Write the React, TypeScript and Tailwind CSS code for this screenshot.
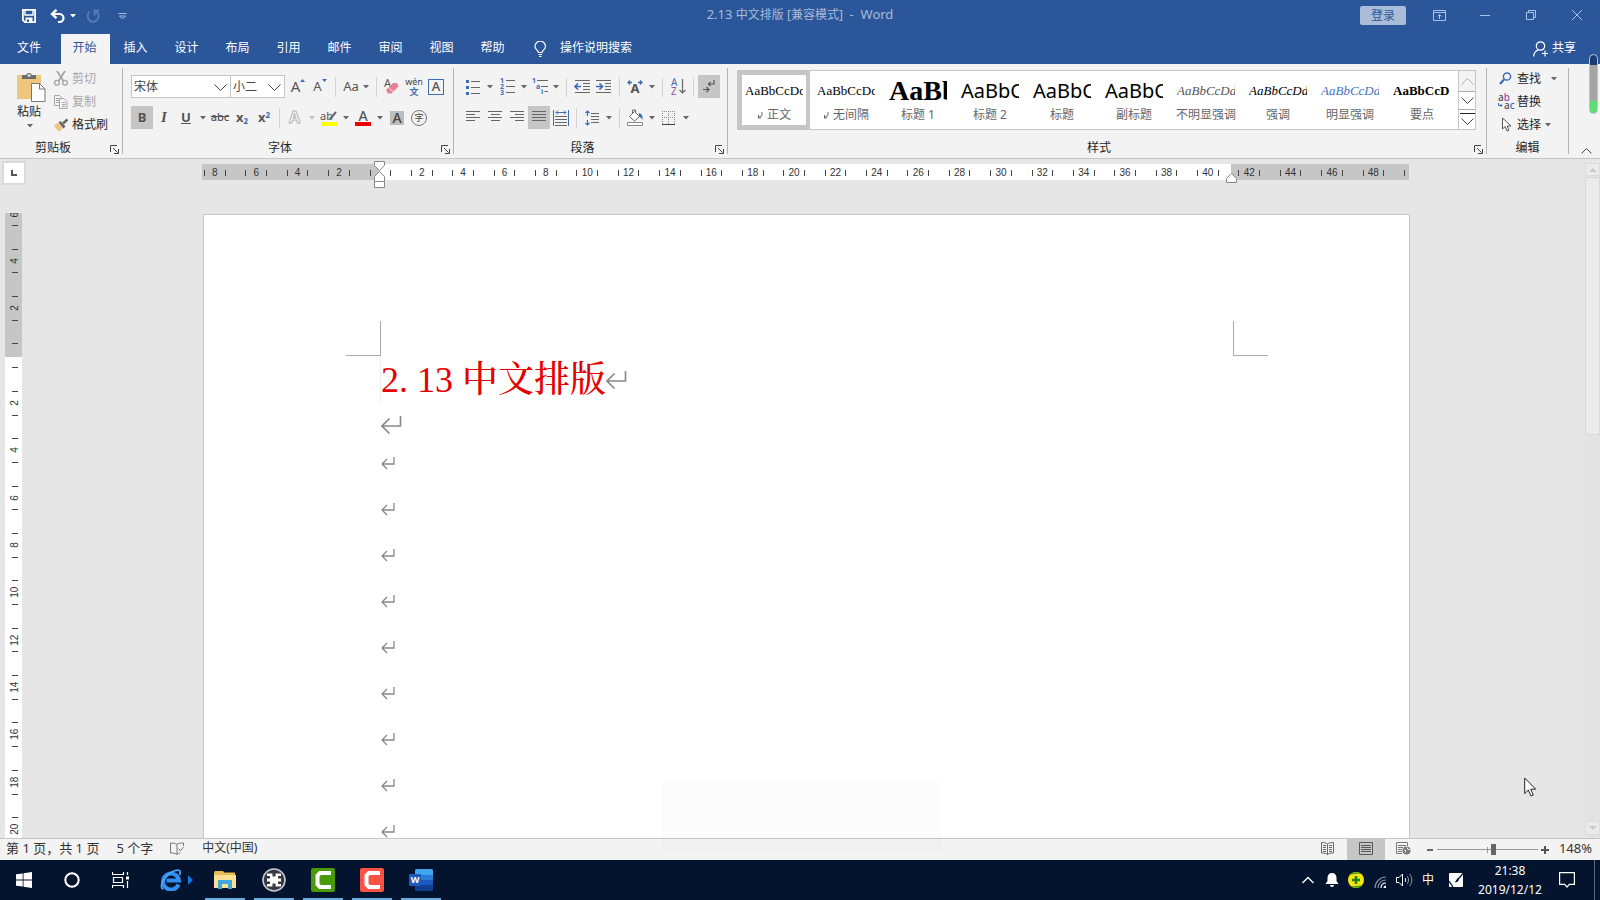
import { useState } from 'react'
import type { ReactNode } from 'react'

const tabs = ['开始', '插入', '设计', '布局', '引用', '邮件', '审阅', '视图', '帮助']

const styleItems = [
  { name: '正文', sample: 'AaBbCcDd', mark: true, font: 'font-["Liberation_Serif",serif] text-[13px] text-black' },
  { name: '无间隔', sample: 'AaBbCcDd', mark: true, font: 'font-["Liberation_Serif",serif] text-[13px] text-black' },
  { name: '标题 1', sample: 'AaBb', font: 'font-["Liberation_Serif",serif] text-[28px] font-bold text-black' },
  { name: '标题 2', sample: 'AaBbC', font: 'text-xl text-black' },
  { name: '标题', sample: 'AaBbC', font: 'text-xl text-black' },
  { name: '副标题', sample: 'AaBbC', font: 'text-xl text-black' },
  { name: '不明显强调', sample: 'AaBbCcDd', font: 'font-["Liberation_Serif",serif] text-[13px] italic text-[#555]' },
  { name: '强调', sample: 'AaBbCcDd', font: 'font-["Liberation_Serif",serif] text-[13px] italic text-black' },
  { name: '明显强调', sample: 'AaBbCcDd', font: 'font-["Liberation_Serif",serif] text-[13px] italic text-[#4472c4]' },
  { name: '要点', sample: 'AaBbCcD', font: 'font-["Liberation_Serif",serif] text-[13px] font-bold text-black' },
]

// One entry per gap between ticks, blank gaps included
const rulerCells = Array.from({ length: 58 }, (_, i) => {
  if (i % 2 === 1) return ''
  const value = Math.abs(8 - i)
  return value === 0 ? '' : String(value)
})

const verticalCells = Array.from({ length: 26 }, (_, i) => {
  if (i % 2 === 0) return ''
  const value = Math.abs(5 - i)
  return value === 0 ? '' : String(value)
})

type IconProps = {
  w: number
  h: number
  className?: string
  children: ReactNode
}

function Icon({ w, h, className = '', children }: IconProps) {
  return (
    <svg aria-hidden="true" className={`shrink-0 ${className}`} fill="none" height={h} viewBox={`0 0 ${w} ${h}`} width={w}>
      {children}
    </svg>
  )
}

function Caret({ light = false }: { light?: boolean }) {
  return (
    <Icon h={4} w={6}>
      <path d="M0 0h6L3 3.6z" fill={light ? '#bdbdbd' : '#666'} />
    </Icon>
  )
}

type ToolProps = {
  label: string
  active?: boolean
  className?: string
  children: ReactNode
}

function Tool({ label, active = false, className = 'w-[22px]', children }: ToolProps) {
  return (
    <button
      aria-label={label}
      className={`flex h-[23px] shrink-0 items-center justify-center text-[#555] ${className} ${active ? 'bg-[#c6c6c6]' : 'hover:bg-[#d5d5d5]'}`}
      type="button"
    >
      {children}
    </button>
  )
}

function CaretTool({ label, light }: { label: string; light?: boolean }) {
  return (
    <Tool className="w-3" label={label}>
      <Caret light={light} />
    </Tool>
  )
}

function Divider() {
  return <span className="mx-1 h-5 w-px shrink-0 bg-[#d4d4d4]" />
}

type GroupProps = {
  title: string
  launcher?: boolean
  className?: string
  children: ReactNode
}

function Group({ title, launcher = true, className = '', children }: GroupProps) {
  return (
    <section className={`flex h-[86px] flex-col border-r border-[#b5b5b5] ${className}`}>
      <div className="flex-1">{children}</div>
      <div className="flex h-[14px] items-center">
        <h2 className="flex-1 pt-[2px] text-center leading-[14px] text-[#262626]">{title}</h2>
        {launcher && (
          <button aria-label={`${title}设置`} className="flex w-4 justify-center pt-1" type="button">
            <Icon h={9} w={9}>
              <path d="M.5 7V.5H7M3 3l4.5 4.5M8.5 4v4.5H4" stroke="#444" />
            </Icon>
          </button>
        )}
      </div>
    </section>
  )
}

function Lines({ rows }: { rows: [number, number][] }) {
  return (
    <Icon h={13} w={15}>
      {rows.map(([x1, x2], i) => (
        <path d={`M${x1} ${i * 3 + 0.5}H${x2}`} key={i} stroke="#666" />
      ))}
    </Icon>
  )
}

function TitleBar() {
  return (
    <div className="grid h-[34px] grid-cols-[1fr_auto_1fr] text-white">
      <div className="flex items-center pb-[2px] pl-[22px]">
        <button aria-label="保存" type="button">
          <Icon h={14} w={14}>
            <path d="M.9.9h12.2v12.2H2.9L.9 11.2z" stroke="#fff" strokeWidth="1.8" />
            <path d="M3 1v5h8V1" stroke="#fff" strokeWidth="1.4" />
            <path d="M3.5 8.5h7V14h-7z" fill="#fff" />
            <path d="M5 10.5h2V13H5z" fill="#2b579a" />
          </Icon>
        </button>
        <button aria-label="撤消" className="ml-[14px]" type="button">
          <Icon h={14} w={16}>
            <path d="M3 5h6.5a4 4 0 0 1 0 8H8" stroke="#fff" strokeWidth="2.2" />
            <path d="M6.5.8 2 5l4.500 4.200" stroke="#fff" strokeWidth="2.4" />
          </Icon>
        </button>
        <button aria-label="撤消列表" className="ml-1" type="button">
          <Icon h={4} w={6}>
            <path d="M0 0h6L3 3.500z" fill="#fff" />
          </Icon>
        </button>
        <button aria-label="重复" className="ml-[10px]" type="button">
          <Icon h={14} w={14}>
            <path d="M8 1.700A5.500 5.500 0 1 1 3.500 3M8.500 6.500V1.500H13" stroke="#5479b4" strokeWidth="2" />
          </Icon>
        </button>
        <button aria-label="自定义快速访问工具栏" className="ml-[18px]" type="button">
          <Icon h={7} w={9}>
            <path d="M.5.5h8M1.500 3l3 3 3-3z" stroke="#a8bddd" />
          </Icon>
        </button>
      </div>
      <h1 className="flex items-center pb-1 text-[#a6bad9]">
        <span className="whitespace-pre">
          <span className="text-[13px]">2.13 </span>中文排版 [兼容模式]<span className="text-[13px]">  -  Word</span>
        </span>
      </h1>
      <div className="flex items-start justify-end">
        <button className="mt-[6px] mr-[10px] h-[19px] w-[46px] rounded-[2px] bg-[#aabcd7] leading-[18px] text-[#2b579a]" type="button">
          登录
        </button>
        <button aria-label="功能区显示选项" className="flex h-[30px] w-[46px] items-center justify-center" type="button">
          <Icon h={11} w={13}>
            <path d="M.5.500h12v10H.5zM.500 2.500h12M6.500 9V4.500M4.500 6.500l2-2 2 2" stroke="#a9c3e8" />
          </Icon>
        </button>
        <button aria-label="最小化" className="flex h-[30px] w-[46px] items-center justify-center" type="button">
          <Icon h={1} w={10}>
            <path d="M0 .5h10" stroke="#a9c3e8" />
          </Icon>
        </button>
        <button aria-label="向下还原" className="flex h-[30px] w-[46px] items-center justify-center" type="button">
          <Icon h={10} w={10}>
            <path d="M.5 2.500h7v7h-7zM2.500 2.500v-2h7v7h-2" stroke="#a9c3e8" />
          </Icon>
        </button>
        <button aria-label="关闭" className="flex h-[30px] w-[46px] items-center justify-center" type="button">
          <Icon h={10} w={10}>
            <path d="m0 0 10 10M10 0 0 10" stroke="#a9c3e8" />
          </Icon>
        </button>
      </div>
    </div>
  )
}

function TabBar({ active, onSelect }: { active: string; onSelect: (tab: string) => void }) {
  return (
    <nav className="flex h-[30px] items-stretch text-white">
      <button className="w-[60px] pr-[2px] pb-[2px]" type="button">
        文件
      </button>
      <div className="flex" role="tablist">
        {tabs.map((tab) => (
          <button
            aria-selected={tab === active}
            className={`mx-px w-[49px] pr-[2px] pb-[2px] ${tab === active ? 'bg-[#f3f3f3] text-[#2b579a]' : ''}`}
            key={tab}
            onClick={() => onSelect(tab)}
            role="tab"
            type="button"
          >
            {tab}
          </button>
        ))}
      </div>
      <button className="ml-[15px] flex items-center gap-[13px] pb-[2px]" type="button">
        <Icon className="mt-[2px]" h={17} w={13}>
          <path d="M4.500 11.500C4.500 9.500 1 8.500 1 5.500a5.200 5.200 0 0 1 10.500 0c0 3-3.500 4-3.500 6zM4.500 13.500H8M5 15.500h2.500" stroke="#fff" strokeWidth="1.200" />
        </Icon>
        操作说明搜索
      </button>
      <button className="mr-6 ml-auto flex items-center gap-1 pb-[2px]" type="button">
        <Icon className="mt-[2px]" h={16} w={15}>
          <circle cx="7.500" cy="5" r="4.200" stroke="#fff" strokeWidth="1.200" />
          <path d="M.7 15.500c0-3.500 1.800-5.500 4.500-6.500M12 9.500v6M9 12.500h6" stroke="#fff" strokeWidth="1.200" />
        </Icon>
        共享
      </button>
    </nav>
  )
}

function ClipboardGroup() {
  return (
    <Group className="w-[123px]" title="剪贴板">
      <div className="flex">
        <button className="ml-[17px] flex w-[29px] flex-col pt-[3px] text-left text-[#262626]" type="button">
          <Icon h={31} w={29}>
            <path d="M0 4h24v24H0z" fill="#eec67c" />
            <path d="M5 8V4h4a3.200 3.200 0 0 1 6 0h4v4z" fill="#6d6d6d" />
            <path d="M10.500 3.500h3v2h-3z" fill="#f3f3f3" />
            <path d="M14.500 12.500h8l5.500 5.500v12.500H14.500z" fill="#fff" stroke="#777" />
            <path d="M22.500 12.500V18H28" stroke="#777" />
          </Icon>
          <span className="leading-5">粘贴</span>
          <span className="mt-[2px] ml-[10px]">
            <Caret />
          </span>
        </button>
        <div className="ml-2 flex flex-col">
          <button className="flex h-[23px] items-center gap-1 pb-[2px] text-[#a6a6a6]" type="button">
            <Icon h={15} w={14}>
              <path d="M3 0l6.500 10M11 0 4.500 10" stroke="#a3a3a3" strokeWidth="1.700" />
              <circle cx="3" cy="11.800" r="2.400" stroke="#a3a3a3" strokeWidth="1.300" />
              <circle cx="11" cy="11.800" r="2.400" stroke="#a3a3a3" strokeWidth="1.300" />
            </Icon>
            剪切
          </button>
          <button className="flex h-[23px] items-center gap-1 pb-[2px] text-[#a6a6a6]" type="button">
            <Icon h={14} w={14}>
              <path d="M5.500 10.500h-5V.5h5l2 2V4M2 3.500h3M2 5.500h3M2 7.500h3M5.500 3.500H10l3 3v7H5.500zM8 7.500h3.500M8 9.500h3.500M8 11.500h3.500" stroke="#a6a6a6" />
            </Icon>
            复制
          </button>
          <button className="flex h-[23px] items-center gap-1 pb-[2px] text-[#262626]" type="button">
            <Icon h={14} w={14}>
              <path d="m0 7 4-2 5 5-3.500 3.500C4 13 1 9.500 0 7z" fill="#eec67c" />
              <path d="m4.500 4.500 2-1.500 5 5.500-2 2z" fill="#666" />
              <path d="m9 5.500 4.500-4" stroke="#666" strokeWidth="2.500" />
            </Icon>
            格式刷
          </button>
        </div>
      </div>
    </Group>
  )
}

function FontGroup() {
  return (
    <Group className="w-[331px] pl-2 [&>div:last-child]:-ml-2" title="字体">
      <div className="flex items-center pt-[7px]">
        <div className="relative h-[23px] w-[100px]">
          <select aria-label="字体" className="h-full w-full appearance-none border border-[#c6c6c6] bg-white pl-[2px] text-[#444]" defaultValue="宋体">
            <option>宋体</option>
            <option>黑体</option>
          </select>
          <Icon className="pointer-events-none absolute top-[9px] right-1" h={7} w={13}>
            <path d="m.5.500 6 6 6-6" stroke="#444" />
          </Icon>
        </div>
        <div className="relative mr-[2px] -ml-px h-[23px] w-[55px]">
          <select aria-label="字号" className="h-full w-full appearance-none border border-[#c6c6c6] bg-white pl-[2px] text-[#444]" defaultValue="小二">
            <option>小二</option>
            <option>三号</option>
          </select>
          <Icon className="pointer-events-none absolute top-[9px] right-1" h={7} w={13}>
            <path d="m.5.500 6 6 6-6" stroke="#444" />
          </Icon>
        </div>
        <Tool label="增大字号">
          <span className="text-[15px] leading-none">A</span>
          <Icon className="mb-3" h={3} w={5}>
            <path d="M0 3h5L2.500 0z" fill="#3e6db5" />
          </Icon>
        </Tool>
        <Tool label="减小字号">
          <span className="text-[13px] leading-none">A</span>
          <Icon className="mb-3" h={3} w={5}>
            <path d="M0 0h5L2.500 3z" fill="#3e6db5" />
          </Icon>
        </Tool>
        <Divider />
        <Tool className="w-8 gap-1" label="更改大小写">
          <span className="text-[13px] leading-none">Aa</span>
          <Caret />
        </Tool>
        <Divider />
        <Tool label="清除所有格式">
          <Icon h={17} w={16}>
            <text fill="#555" fontSize="11" x="0" y="9">A</text>
            <path d="m2 12 7-7h4l1.500 3.500-7 7H4z" fill="#e58096" />
            <path d="m4.500 9.500 5 4.500" stroke="#f3f3f3" />
          </Icon>
        </Tool>
        <Tool className="w-[22px] flex-col" label="拼音指南">
          <span className="text-[9px] leading-[10px] text-[#444]">wén</span>
          <span className="text-[9px] leading-[10px] font-bold text-[#3e6db5]">文</span>
        </Tool>
        <Tool label="字符边框">
          <span className="flex h-4 w-4 items-center justify-center border border-[#3e6db5] text-[13px] leading-none font-medium">A</span>
        </Tool>
      </div>
      <div className="flex items-center pt-2">
        <Tool active label="加粗">
          <span className="text-[13px] font-bold">B</span>
        </Tool>
        <Tool label="倾斜">
          <span className="font-['Liberation_Serif',serif] text-[15px] font-bold italic">I</span>
        </Tool>
        <Tool label="下划线">
          <span className="text-[13px] font-bold underline">U</span>
        </Tool>
        <CaretTool label="下划线样式" />
        <Tool label="删除线">
          <span className="text-[11px] font-medium line-through">abc</span>
        </Tool>
        <Tool label="下标">
          <span className="text-[13px] font-bold">
            x<sub className="text-[8px] text-[#3e6db5]">2</sub>
          </span>
        </Tool>
        <Tool label="上标">
          <span className="text-[13px] font-bold">
            x<sup className="text-[8px] text-[#3e6db5]">2</sup>
          </span>
        </Tool>
        <Divider />
        <Tool label="文本效果">
          <Icon h={15} w={14}>
            <text fill="#fff" fontSize="16" fontWeight="bold" stroke="#b5b5b5" x="1" y="13">A</text>
          </Icon>
        </Tool>
        <CaretTool label="文本效果列表" light />
        <Tool className="w-[22px] flex-col" label="突出显示">
          <span className="flex h-3 items-center text-[11px] leading-none">
            ab
            <Icon className="-ml-1" h={11} w={9}>
              <path d="m1 9 6-7" stroke="#666" strokeWidth="2" />
            </Icon>
          </span>
          <span className="h-1 w-4 bg-[#ffff00]" />
        </Tool>
        <CaretTool label="突出显示颜色" />
        <Tool className="w-[22px] flex-col" label="字体颜色">
          <span className="h-3 text-[14px] leading-[12px] font-medium">A</span>
          <span className="h-1 w-4 bg-[#e60000]" />
        </Tool>
        <CaretTool label="字体颜色列表" />
        <Tool label="字符底纹">
          <span className="h-[14px] w-[14px] bg-[#bdbdbd] text-[14px] leading-[13px] font-medium text-[#444]">A</span>
        </Tool>
        <Tool label="带圈字符">
          <span className="flex h-4 w-4 shrink-0 items-center justify-center rounded-full border border-[#777] text-[9px] leading-none text-[#444]">字</span>
        </Tool>
      </div>
    </Group>
  )
}

function ParagraphGroup() {
  return (
    <Group className="w-[274px] pl-2 [&>div:last-child]:-ml-2" title="段落">
      <div className="flex items-center pt-[7px]">
        <Tool label="项目符号">
          <Icon h={16} w={14}>
            <path d="M0 1h3v3H0zM0 7h3v3H0zM0 13h3v3H0z" fill="#3e6db5" />
            <path d="M5 2.500h9M5 8.500h9M5 14.500h9" stroke="#666" />
          </Icon>
        </Tool>
        <CaretTool label="项目符号库" />
        <Tool label="编号">
          <Icon h={17} w={15}>
            <g fill="#3e6db5" fontSize="7" fontWeight="bold">
              <text x="0" y="5">1</text>
              <text x="0" y="11">2</text>
              <text x="0" y="17">3</text>
            </g>
            <path d="M6 2.500h9M6 8.500h9M6 14.500h9" stroke="#666" />
          </Icon>
        </Tool>
        <CaretTool label="编号库" />
        <Tool className="w-5" label="多级列表">
          <Icon h={17} w={17}>
            <g fill="#3e6db5" fontSize="7" fontWeight="bold">
              <text x="0" y="5">1</text>
              <text x="4" y="11">a</text>
              <text x="9" y="16">i</text>
            </g>
            <path d="M5 2.500h11M9 8.500h7M12.500 13.500H16" stroke="#666" />
          </Icon>
        </Tool>
        <CaretTool label="列表库" />
        <Divider />
        <Tool label="减少缩进量">
          <Icon h={14} w={16}>
            <path d="M1 .5h15M9 3.500h7M9 6.500h7M9 9.500h7M1 12.500h15" stroke="#666" />
            <path d="M7 6.500H1M4 3.500l-3 3 3 3" stroke="#3e6db5" strokeWidth="1.700" />
          </Icon>
        </Tool>
        <Tool label="增加缩进量">
          <Icon h={14} w={16}>
            <path d="M0 .5h15M9 3.500h6M9 6.500h6M9 9.500h6M0 12.500h15" stroke="#666" />
            <path d="M0 6.500h6M3.500 3.500l3 3-3 3" stroke="#3e6db5" strokeWidth="1.700" />
          </Icon>
        </Tool>
        <Divider />
        <Tool label="中文版式">
          <Icon h={14} w={16}>
            <text fill="#555" fontSize="13" fontWeight="bold" textAnchor="middle" x="8" y="13">A</text>
            <path d="M5 2.500H1M3 .5l-2 2 2 2M11 2.500h4M13 .5l2 2-2 2" stroke="#3e6db5" strokeWidth="1.300" />
          </Icon>
        </Tool>
        <CaretTool label="中文版式列表" />
        <Divider />
        <Tool label="排序">
          <Icon h={17} w={15}>
            <text fill="#3e6db5" fontSize="10" x="0" y="8">A</text>
            <text fill="#9a50ae" fontSize="10" x="0" y="17">Z</text>
            <path d="M11.500 1v14M8.500 12l3 3 3-3" stroke="#666" strokeWidth="1.200" />
          </Icon>
        </Tool>
        <Divider />
        <Tool active label="显示编辑标记">
          <Icon h={13} w={12}>
            <path d="M11 0v4H5.500M7.500 2l-2 2 2 2M0 9.500h6M3.500 7l2.500 2.500L3.500 12" stroke="#555" strokeWidth="1.200" />
          </Icon>
        </Tool>
      </div>
      <div className="flex items-center pt-2">
        <Tool label="左对齐">
          <Lines rows={[[0, 14], [0, 9], [0, 14], [0, 9]]} />
        </Tool>
        <Tool label="居中">
          <Lines rows={[[0, 14], [3, 12], [0, 14], [3, 12]]} />
        </Tool>
        <Tool label="右对齐">
          <Lines rows={[[0, 14], [5, 14], [0, 14], [5, 14]]} />
        </Tool>
        <Tool active label="两端对齐">
          <Lines rows={[[0, 14], [0, 14], [0, 14], [0, 14]]} />
        </Tool>
        <Tool label="分散对齐">
          <Icon h={16} w={16}>
            <path d="M.5 0v16M15.500 0v16M3 2.500h10M5 .5l-2 2 2 2M11 .5l2 2-2 2" stroke="#3e6db5" />
            <path d="M2 6.500h12M2 9.500h12M2 12.500h12M2 15.500h12" stroke="#666" />
          </Icon>
        </Tool>
        <Divider />
        <Tool label="行距">
          <Icon h={16} w={14}>
            <path d="M2.500 1v5M.5 3l2-2 2 2M2.500 10v5M.5 13l2 2 2-2" stroke="#3e6db5" strokeWidth="1.200" />
            <path d="M6 3.500h8M6 6.500h8M6 9.500h8M6 12.500h8" stroke="#666" />
          </Icon>
        </Tool>
        <CaretTool label="行距列表" />
        <Divider />
        <Tool label="底纹">
          <Icon h={17} w={17}>
            <path d="m2.500 7.500 5-5 5 5-5 4.500zM5.500 4V1h3v3" fill="#fff" stroke="#666" />
            <path d="M12 4c3 1 4 3 3.500 7-1-2-2-3-3.500-3z" fill="#3e6db5" />
            <path d="M.5 13.500h15v3H.5z" fill="#fff" stroke="#888" />
          </Icon>
        </Tool>
        <CaretTool label="底纹颜色" />
        <Tool label="边框">
          <Icon h={14} w={14}>
            <path d="M.5 0v13M6.500 0v13M12.500 0v13M0 .5h13M0 6.500h13" stroke="#888" strokeDasharray="1 1" />
            <path d="M0 13.500h13" stroke="#444" />
          </Icon>
        </Tool>
        <CaretTool label="边框列表" />
      </div>
    </Group>
  )
}

function StylesGroup() {
  return (
    <Group className="min-w-0 flex-1" title="样式">
      <div className="mt-[2px] mr-[10px] ml-[9px] flex h-[60px] border border-[#c6c6c6] bg-white">
        <div className="flex flex-1 overflow-hidden">
          {styleItems.map((item, index) => (
            <button
              className={`flex h-[58px] w-[72px] shrink-0 flex-col items-center border-4 ${index === 0 ? 'border-[#c6c6c6]' : 'border-transparent'}`}
              key={item.name}
              type="button"
            >
              <span className={`h-[30px] w-[58px] overflow-hidden text-left leading-[31px] whitespace-nowrap ${item.font}`}>{item.sample}</span>
              <span className="flex items-center gap-1 leading-5 whitespace-nowrap text-[#666]">
                {item.mark && (
                  <Icon h={7} w={6}>
                    <path d="M5 0v3.500L1 6M1.500 3v3H4" stroke="#666" />
                  </Icon>
                )}
                {item.name}
              </span>
            </button>
          ))}
        </div>
        <div className="flex w-[17px] flex-col border-l border-[#c6c6c6]">
          <button aria-label="上一行" className="flex h-5 items-center justify-center bg-[#f3f3f3]" type="button">
            <Icon h={7} w={13}>
              <path d="m.5 6.500 6-6 6 6" stroke="#b0b0b0" />
            </Icon>
          </button>
          <button aria-label="下一行" className="flex h-[19px] items-center justify-center border-y border-[#ababab]" type="button">
            <Icon h={7} w={13}>
              <path d="m.5.500 6 6 6-6" stroke="#444" />
            </Icon>
          </button>
          <button aria-label="其他样式" className="flex flex-1 items-center justify-center" type="button">
            <Icon h={13} w={15}>
              <path d="M0 .500h15" stroke="#222" />
              <path d="m1.500 5.500 6 6 6-6" stroke="#444" />
            </Icon>
          </button>
        </div>
      </div>
    </Group>
  )
}

function EditGroup() {
  return (
    <Group className="w-[82px]" launcher={false} title="编辑">
      <div className="flex flex-col pl-[11px] text-[#262626]">
        <button className="flex h-[23px] items-center pb-[2px]" type="button">
          <span className="flex w-[19px]">
            <Icon className="ml-px" h={13} w={13}>
              <circle cx="8" cy="4.500" r="3.600" stroke="#3e6db5" strokeWidth="1.500" />
              <path d="M5 7.500 1 12" stroke="#3e6db5" strokeWidth="2.200" />
            </Icon>
          </span>
          查找
          <span className="ml-[10px]">
            <Caret />
          </span>
        </button>
        <button className="flex h-[23px] items-center pb-[2px]" type="button">
          <Icon className="mr-[2px]" h={17} w={17}>
            <g fontSize="10" fontWeight="500">
              <text fill="#555" x="0" y="8">
                a<tspan fill="#9a50ae">b</tspan>
              </text>
              <text fill="#555" x="6" y="16">
                a<tspan fill="#3e6db5">c</tspan>
              </text>
            </g>
            <path d="M.5 10v2.500H4M2.500 11 4 12.500 2.500 14" stroke="#3e6db5" />
          </Icon>
          替换
        </button>
        <button className="flex h-[23px] items-center pb-[2px]" type="button">
          <span className="flex w-[19px]">
            <Icon className="ml-1" h={15} w={10}>
              <path d="M.5 1v11l2.700-2.500L5 14l2-.8-1.800-4.200H9z" fill="#fff" stroke="#555" />
            </Icon>
          </span>
          选择
          <span className="ml-1">
            <Caret />
          </span>
        </button>
      </div>
    </Group>
  )
}

function HorizontalRuler() {
  return (
    <div className="relative mr-px h-4">
      <div className="flex h-full items-center bg-[linear-gradient(to_right,#c6c6c6_177px,#fff_177px,#fff_calc(100%-178px),#c6c6c6_calc(100%-178px))] pt-px pr-1 pl-[2px]">
        {rulerCells.map((cell, i) => (
          <div className="flex min-w-0 flex-1 items-center" key={i}>
            <span className="h-[6px] w-px shrink-0 bg-[#444]" />
            <span className="flex-1 text-center font-['Liberation_Sans',sans-serif] text-[10px] leading-4 text-[#333]">{cell}</span>
          </div>
        ))}
        <span className="h-[6px] w-px shrink-0 bg-[#444]" />
      </div>
      <Icon className="absolute -top-[3px] left-[172px]" h={28} w={11}>
        <path d="M.5.5h10v4l-5 5-5-5zM.5 20.500v-5l5-5 5 5v5zM.5 20.500h10v6H.5z" fill="#fff" stroke="#888" />
      </Icon>
      <Icon className="absolute top-[9px] right-[172px]" h={10} w={11}>
        <path d="M.5 9.500v-4l5-5 5 5v4z" fill="#fff" stroke="#888" />
      </Icon>
    </div>
  )
}

function VerticalRuler() {
  return (
    <div className="mt-7 -mb-[3px] ml-[5px] flex w-[17px] flex-1 flex-col items-center bg-[linear-gradient(to_bottom,#c6c6c6_144px,#fff_144px)] pl-[2px] font-['Liberation_Sans',sans-serif] text-[10px] leading-none text-[#333]">
      <div className="flex h-3 shrink-0 items-start overflow-hidden">
        <span className="-mt-px rotate-180 [writing-mode:vertical-rl]">6</span>
      </div>
      {verticalCells.map((cell, i) => (
        <div className="flex min-h-0 flex-1 flex-col items-center" key={i}>
          <span className="h-px w-[6px] shrink-0 bg-[#444]" />
          <span className="flex flex-1 rotate-180 items-center justify-center text-center [writing-mode:vertical-rl]">{cell}</span>
        </div>
      ))}
    </div>
  )
}

function LargeMark() {
  return (
    <Icon h={19} w={21}>
      <path d="M19.500 0v10H1M8.500 2.500 1 10l7.500 7.500" stroke="#888" strokeWidth="1.600" />
    </Icon>
  )
}

function SmallMark() {
  return (
    <Icon h={13} w={14}>
      <path d="M13 0v7H1M6 2 1 7l5 5" stroke="#888" strokeWidth="1.300" />
    </Icon>
  )
}

function Page() {
  return (
    <article className="mt-[34px] ml-px min-h-0 flex-1 overflow-hidden border border-b-0 border-[#c6c6c6] bg-white">
      <div className="mt-[106px] mr-[141px] ml-[142px] flex justify-between">
        <span className="h-[35px] w-[35px] border-r border-b border-[#ababab]" />
        <span className="h-[35px] w-[35px] border-b border-l border-[#ababab]" />
      </div>
      <div className="pl-[176px]">
        <h2 className="flex h-[46px] items-center border-l border-[#eee] pt-[2px] font-['Liberation_Serif','Noto_Serif_CJK_SC','Noto_Sans_CJK_SC',serif] text-4xl leading-[44px] font-medium whitespace-pre text-[#e60000]">
          <span>
            2<span className="inline-block w-[18px]">.</span>13 中文排版
          </span>
          <LargeMark />
        </h2>
        <p className="flex h-[46px] items-center pl-px">
          <LargeMark />
        </p>
        {Array.from({ length: 9 }, (_, i) => (
          <p className="flex h-[46px] items-start pt-[9px] pl-px" key={i}>
            <SmallMark />
          </p>
        ))}
      </div>
    </article>
  )
}

function ScrollBar() {
  return (
    <div className="mt-1 flex w-[15px] flex-col bg-[#e3e3e3]">
      <button aria-label="向上滚动" className="flex h-[13px] items-center justify-center border border-[#dcdcdc] bg-[#ebebeb]" type="button">
        <Icon h={4} w={8}>
          <path d="M0 4h8L4 0z" fill="#c9c9c9" />
        </Icon>
      </button>
      <div className="mt-px h-[258px] border border-[#d9d9d9] bg-[#ebebeb]" />
      <button aria-label="向下滚动" className="mt-auto mb-[3px] flex h-[14px] items-center justify-center border border-[#dcdcdc] bg-[#ebebeb]" type="button">
        <Icon h={4} w={8}>
          <path d="M0 0h8L4 4z" fill="#c9c9c9" />
        </Icon>
      </button>
    </div>
  )
}

function StatusBar() {
  const [zoom, setZoom] = useState(56)

  return (
    <footer className="flex h-[22px] items-center border-t border-[#c6c6c6] bg-[#f3f3f3] pr-2 pl-[6px] text-[#333]">
      <span className="pb-[3px] text-[13px] leading-[18px]">第 1 页，共 1 页</span>
      <span className="ml-[17px] pb-[3px] text-[13px] leading-[18px]">5 个字</span>
      <Icon className="mb-[2px] ml-[17px]" h={14} w={14}>
        <path d="M7 2.500v10M7 2.500C5 1 3 1 .5 1v10C3 11 5 11 7 12.500 8 11.500 9 11 10.500 11M7 2.500C8.500 1 10 1 13.500 1v3M8.500 6.500l2 2.500 3-4" stroke="#777" />
      </Icon>
      <button className="ml-[18px] pb-[3px] leading-[18px]" type="button">
        中文(中国)
      </button>
      <div className="ml-auto flex h-full items-center">
        <button aria-label="阅读视图" className="flex h-full w-[38px] items-center justify-center pb-[2px]" type="button">
          <Icon h={13} w={13}>
            <path d="M6.500 2v11M.5.500c3 0 5 .5 6 1.500 1-1 3-1.500 6-1.500v10.500c-3 0-5 .5-6 1.500-1-1-3-1.500-6-1.500zM2 3.500h3M2 5.500h3M2 7.500h3M2 9.500h3M8 3.500h3M8 5.500h3M8 7.500h3M8 9.500h3" stroke="#666" />
          </Icon>
        </button>
        <button aria-label="页面视图" className="flex h-full w-[38px] items-center justify-center bg-[#c6c6c6] pb-[2px]" type="button">
          <Icon h={13} w={14}>
            <path d="M.5.500h13v12H.5zM2 3.500h10M2 5.500h10M2 7.500h10M2 9.500h10" stroke="#555" />
          </Icon>
        </button>
        <button aria-label="Web 版式视图" className="flex h-full w-[38px] items-center justify-center pb-[2px]" type="button">
          <Icon h={13} w={15}>
            <path d="M6 11.500H.5V.500h11V4M2 3.500h8M2 5.500h5M2 7.500h4M2 9.500h4" stroke="#777" />
            <circle cx="10.500" cy="8.500" fill="#777" r="4" />
            <path d="M8 7.500 10 9l-1 1.500M11 5.500l1 2h2" stroke="#f3f3f3" />
          </Icon>
        </button>
        <button aria-label="缩小" className="ml-1 flex w-[10px] items-center justify-start" type="button">
          <Icon h={2} w={6}>
            <path d="M0 0h6v2H0z" fill="#666" />
          </Icon>
        </button>
        <div className="relative flex w-[101px] items-center">
          <span className="absolute top-1/2 left-1/2 -mt-[3px] h-[6px] w-px bg-[#999]" />
          <input
            aria-label="显示比例"
            className="relative h-[11px] w-full appearance-none bg-transparent [&::-webkit-slider-runnable-track]:h-px [&::-webkit-slider-runnable-track]:bg-[#999] [&::-webkit-slider-thumb]:-mt-[5px] [&::-webkit-slider-thumb]:h-[11px] [&::-webkit-slider-thumb]:w-[5px] [&::-webkit-slider-thumb]:appearance-none [&::-webkit-slider-thumb]:bg-[#666]"
            max={100}
            min={0}
            onChange={(e) => setZoom(Number(e.target.value))}
            type="range"
            value={zoom}
          />
        </div>
        <button aria-label="放大" className="ml-[3px] flex items-center" type="button">
          <Icon h={8} w={8}>
            <path d="M4 0v8M0 4h8" stroke="#555" strokeWidth="2" />
          </Icon>
        </button>
        <button className="ml-[10px] pb-[3px] text-[13px] leading-[18px]" type="button">
          148%
        </button>
      </div>
    </footer>
  )
}

function TaskApp({ label, children }: { label: string; children: ReactNode }) {
  return (
    <button aria-label={label} className="flex h-full w-10 items-center justify-center border-b-2 border-[#6ca9de] pt-[2px]" type="button">
      {children}
    </button>
  )
}

function TaskBar() {
  return (
    <div className="flex h-10 items-stretch bg-[#04132e] text-white">
      <button aria-label="开始菜单" className="flex w-12 items-center justify-center" type="button">
        <Icon h={16} w={16}>
          <path d="m0 2.300 6.700-.9v6.200H0zM7.500 1.300 16 0v7.600H7.500zM0 8.400h6.700v6.200L0 13.700zM7.500 8.400H16V16l-8.500-1.300z" fill="#fff" />
        </Icon>
      </button>
      <button aria-label="搜索" className="flex w-12 items-center justify-center" type="button">
        <Icon h={16} w={16}>
          <circle cx="8" cy="8" r="6.700" stroke="#fff" strokeWidth="2" />
        </Icon>
      </button>
      <button aria-label="任务视图" className="flex w-12 items-center justify-center" type="button">
        <Icon h={16} w={17}>
          <path d="M.5 0v2.500h11V0M.5 16v-2.500h11V16M1.500 5.500h9v5h-9zM15.500 0v3M15.500 9v7" stroke="#fff" strokeWidth="1.200" />
          <path d="M14 4.500h3v3h-3z" fill="#fff" />
        </Icon>
      </button>
      <button aria-label="Internet Explorer" className="flex w-[61px] items-center pl-4" type="button">
        <Icon h={22} w={22}>
          <path d="M18.500 15.500A8 8 0 1 1 19 11.500H6.500" stroke="#2f8ff0" strokeWidth="4" />
          <path d="M3 20.500C-1.500 17 5 5.500 14 2c5-2 7.500-.5 5.500 4" stroke="#4ba6f8" strokeWidth="1.700" />
        </Icon>
        <Icon className="ml-[6px]" h={10} w={5}>
          <path d="M0 0v10l5-5z" fill="#1677dc" />
        </Icon>
      </button>
      <div className="flex gap-[9px]">
        <TaskApp label="文件资源管理器">
          <Icon h={18} w={22}>
            <path d="M0 1.500 1 0h8l1.500 1.500H21V17H0z" fill="#e8bd4e" />
            <path d="M0 4h22v13H0z" fill="#fbe197" />
            <path d="M4 9h14v9h-4v-5H8v5H4z" fill="#41a8dc" />
          </Icon>
        </TaskApp>
        <TaskApp label="录屏工具">
          <Icon h={24} w={24}>
            <circle cx="12" cy="12" fill="#36383f" r="11" stroke="#c5cad2" strokeWidth="1.600" />
            <path d="M5 5.500h5.500v3h3v-3H19V8h-3v2.500h3v3h-3V16h3v2.500h-5.500v-3h-3v3H5V16h3v-2.500H5v-3h3V8H5z" fill="#fff" />
          </Icon>
        </TaskApp>
        <TaskApp label="Camtasia">
          <Icon h={24} w={24}>
            <rect fill="#4a9a06" height="24" rx="2" width="24" />
            <path d="M20 5H9L6.500 7.500v9L9 19h11" stroke="#fff" strokeWidth="4" />
          </Icon>
        </TaskApp>
        <TaskApp label="Camtasia 录像机">
          <Icon h={24} w={24}>
            <rect fill="#fa5245" height="24" rx="2" width="24" />
            <path d="M20 5H9L6.500 7.500v9L9 19h11" stroke="#fff" strokeWidth="4" />
          </Icon>
        </TaskApp>
        <TaskApp label="Word">
          <Icon h={22} w={24}>
            <path d="M6 1.500A1.500 1.500 0 0 1 7.500 0h15A1.500 1.500 0 0 1 24 1.500V6H6z" fill="#41a5ee" />
            <path d="M6 6h18v5H6z" fill="#2b7cd3" />
            <path d="M6 11h18v5H6z" fill="#185abd" />
            <path d="M6 16h18v4.500a1.500 1.500 0 0 1-1.500 1.500h-15A1.500 1.500 0 0 1 6 20.500z" fill="#103f91" />
            <rect fill="#185abd" height="12" rx="1" width="12" y="5" />
            <text fill="#fff" fontSize="9" fontWeight="bold" textAnchor="middle" x="6" y="14">W</text>
          </Icon>
        </TaskApp>
      </div>
      <div className="ml-auto flex items-stretch">
        <button aria-label="显示隐藏的图标" className="flex w-6 items-center justify-center" type="button">
          <Icon h={8} w={12}>
            <path d="m.5 7 5.500-5.500L11.500 7" stroke="#fff" strokeWidth="1.300" />
          </Icon>
        </button>
        <button aria-label="通知" className="flex w-6 items-center justify-center" type="button">
          <Icon h={14} w={14}>
            <path d="M7 0c3 0 4.500 2 4.500 5v3l2 3H.5l2-3V5C2.500 2 4 0 7 0zM5 12h4a2 2 0 0 1-4 0z" fill="#fff" />
          </Icon>
        </button>
        <button aria-label="安全卫士" className="flex w-6 items-center justify-center" type="button">
          <Icon h={16} w={16}>
            <circle cx="8" cy="8" fill="#f5e50a" r="8" />
            <path d="M2 3a8 8 0 0 1 11-1C9 1.500 5 2 2 3zM14 13a8 8 0 0 1-11 1c4 .5 8 0 11-1z" fill="#3a9c12" />
            <path d="M8 4v8M4 8h8" stroke="#1d7d1f" strokeWidth="2.500" />
          </Icon>
        </button>
        <button aria-label="网络" className="flex w-6 items-center justify-center" type="button">
          <Icon className="mt-1" h={13} w={13}>
            <path d="M1 12C1 6 6 1 12 1M4 12c0-4.500 3.500-8 8-8" stroke="#7e8899" strokeWidth="1.200" />
            <path d="M7 12c0-3 2-5 5-5" stroke="#fff" strokeWidth="1.200" />
            <path d="M9.500 12c0-1.500 1-2.500 2.500-2.500V12z" fill="#fff" />
          </Icon>
        </button>
        <button aria-label="音量" className="flex w-6 items-center justify-center" type="button">
          <Icon h={14} w={17}>
            <path d="M.5 4.500H3L6.500 1v12L3 9.500H.5zM9 5c1 1 1 3 0 4" stroke="#fff" />
            <path d="M11 3c2 2 2 6 0 8M13.500 1c3 3.500 3 8.500 0 12" stroke="#929bab" />
          </Icon>
        </button>
        <button className="w-6" type="button">
          中
        </button>
        <button aria-label="手写输入" className="flex w-8 items-center justify-center" type="button">
          <Icon h={14} w={14}>
            <rect fill="#fff" height="14" rx="1" width="14" />
            <path d="m14 .500-6 7M0 8l4 6" stroke="#04132e" strokeWidth="1.300" />
            <path d="m9 5.500-2.500 3.500L9 8z" fill="#04132e" stroke="#04132e" />
          </Icon>
        </button>
        <button className="flex w-[76px] flex-col items-center justify-center leading-[19px]" type="button">
          <span>21:38</span>
          <span>2019/12/12</span>
        </button>
        <button aria-label="操作中心" className="flex w-[38px] items-center justify-center" type="button">
          <Icon h={16} w={16}>
            <path d="M.6.600h14.800v11.800h-5L8 15l-2.400-2.600h-5z" stroke="#fff" strokeWidth="1.200" />
          </Icon>
        </button>
        <button aria-label="显示桌面" className="mr-[5px] w-[9px] border-r border-[#5b6679]" type="button" />
      </div>
    </div>
  )
}

export default function App() {
  const [activeTab, setActiveTab] = useState('开始')

  return (
    <div className="relative flex h-screen flex-col overflow-hidden bg-[#e6e6e6] font-['Noto_Sans','Noto_Sans_CJK_SC',sans-serif] text-xs">
      <header className="bg-[#2b579a]">
        <TitleBar />
        <TabBar active={activeTab} onSelect={setActiveTab} />
      </header>
      <div className="flex border-b border-[#c6c6c6] bg-[#f3f3f3] py-1">
        <ClipboardGroup />
        <FontGroup />
        <ParagraphGroup />
        <StylesGroup />
        <EditGroup />
        <div className="flex w-[31px] items-end justify-center pl-1">
          <button aria-label="折叠功能区" type="button">
            <Icon h={6} w={11}>
              <path d="m.5 5.500 5-5 5 5" stroke="#444" />
            </Icon>
          </button>
        </div>
      </div>
      <main className="flex min-h-0 flex-1 overflow-hidden">
        <div className="flex w-[27px] flex-col">
          <button aria-label="制表符" className="mt-[2px] ml-[2px] flex h-6 w-6 items-center justify-center border-2 border-[#dadada] bg-white" type="button">
            <Icon h={6} w={6}>
              <path d="M1 0v5h5" stroke="#555" strokeWidth="2" />
            </Icon>
          </button>
          <VerticalRuler />
        </div>
        <div className="flex min-w-0 flex-1 justify-center">
          <div className="flex w-[1208px] flex-col pt-[5px]">
            <HorizontalRuler />
            <Page />
          </div>
        </div>
        <ScrollBar />
      </main>
      <StatusBar />
      <TaskBar />
      <div className="pointer-events-none absolute bottom-12 left-[662px] h-[70px] w-[280px] bg-black/1" />
      <div className="absolute top-[54px] right-[2px] flex h-[60px] w-[9px] flex-col justify-end overflow-hidden rounded-full border border-[#b9c3d3] bg-[linear-gradient(to_bottom,#1d3c74_10px,#a5a5a5_10px)]">
        <span className="h-3 bg-[#5fdc72]" />
      </div>
      <Icon className="pointer-events-none absolute right-[63px] bottom-[103px]" h={20} w={13}>
        <path d="M.7 1v15.500l3.600-3.500 2.700 6 2.300-1-2.600-5.800h5z" fill="#fff" stroke="#222" />
      </Icon>
    </div>
  )
}
